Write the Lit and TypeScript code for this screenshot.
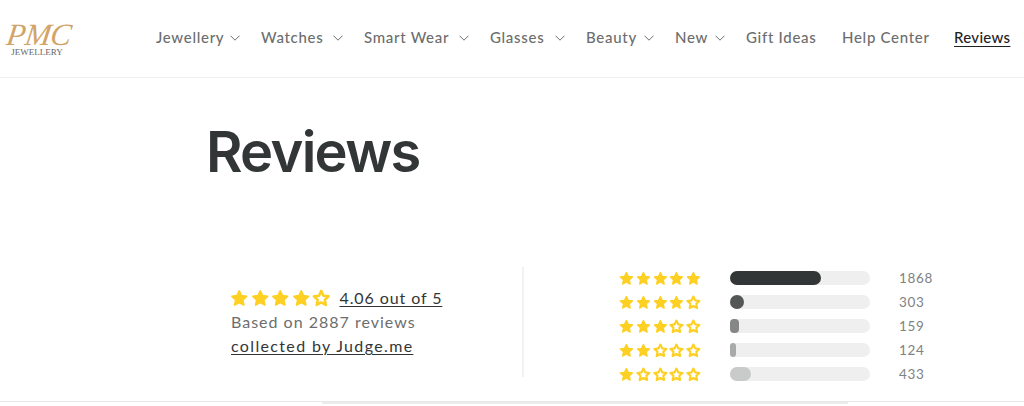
import { LitElement, html, css, svg } from "lit";
import { customElement } from "lit/decorators.js";

const STAR = "M12 3.4l2.6 5.6 6 .75-4.45 4.15 1.2 6L12 16.95l-5.35 2.95 1.2-6L3.4 9.75l6-.75z";

const star = (filled: boolean) =>
  svg`<path d=${STAR} fill=${filled ? "#fdd023" : "#fff"} stroke="#fdd023" stroke-width=${filled ? 2 : 3} stroke-linejoin="round"/>`;

const stars = (n: number, cls: string) => html`<span class="stars ${cls}">${[0, 1, 2, 3, 4].map(
  (i) => html`<svg viewBox="0 0 24 24" aria-hidden="true">${star(i < n)}</svg>`
)}</span>`;

const NAV: [string, number, boolean][] = [
  ["Jewellery", 64, true],
  ["Watches", 62, true],
  ["Smart Wear", 85, true],
  ["Glasses", 55, true],
  ["Beauty", 48, true],
  ["New", 30, true],
  ["Gift Ideas", 70, false],
  ["Help Center", 86, false],
];

const ROWS = [
  { n: 5, w: 91, r: 7, c: "#333637", count: 1868 },
  { n: 4, w: 14, r: 7, c: "#555757", count: 303 },
  { n: 3, w: 9, r: 4, c: "#858787", count: 159 },
  { n: 2, w: 6, r: 3, c: "#a8a9a9", count: 124 },
  { n: 1, w: 21, r: 7, c: "#c9caca", count: 433 },
];

@customElement("app-root")
export class AppRoot extends LitElement {
  static styles = css`
    :host {
      display: block;
      width: 1024px;
      height: 406px;
      overflow: hidden;
      background: #fff;
      font-family: "Lato", "Liberation Sans", sans-serif;
      color: #333637;
    }
    header {
      height: 77px;
      border-bottom: 1px solid #efefef;
      display: flex;
      align-items: center;
      padding-left: 5px;
      box-sizing: content-box;
    }
    .logo {
      width: 68px;
      margin-right: 83px;
      display: flex;
      flex-direction: column;
      align-items: center;
      margin-top: 2px;
    }
    .pmc {
      font-family: "Liberation Serif", serif;
      font-style: italic;
      font-size: 31px;
      line-height: 25px;
      letter-spacing: -0.5px;
      color: #d2a468;
      font-weight: 400;
      transform: skewX(-8deg);
    }
    .jew {
      font-family: "Liberation Serif", serif;
      font-size: 9px;
      line-height: 9px;
      letter-spacing: 0;
      margin-top: 1px;
      margin-right: 4px;
      color: #666;
    }
    nav {
      display: flex;
      align-items: center;
      font-size: 15px;
      font-weight: 500;
      letter-spacing: 0.7px;
      color: #6c6e6e;
      margin-top: -4px;
    }
    .item {
      display: flex;
      align-items: center;
      white-space: nowrap;
      margin-right: 26px;
    }
    .item.has {
      margin-right: 21px;
    }
    .item svg {
      width: 10px;
      height: 6px;
      margin-left: 10px;
      margin-top: 3px;
      flex: none;
    }
    .current {
      color: #1f2222;
      text-decoration: underline;
      text-underline-offset: 3px;
      text-decoration-thickness: 1px;
      letter-spacing: 0.3px;
      margin-right: 0;
    }
    main {
      padding-left: 206px;
    }
    h1 {
      margin: 0;
      padding-top: 38px;
      height: 74px;
      font-family: "Inter", "Lato", sans-serif;
      font-size: 56px;
      line-height: 72px;
      font-weight: 600;
      letter-spacing: -1.7px;
      color: #333637;
    }
    .summary {
      display: flex;
      margin-top: 77px;
      height: 110px;
    }
    .left {
      width: 293px;
      margin-left: 25px;
      border-right: 2px solid #f2f2f2;
      font-size: 16px;
      letter-spacing: 1px;
      line-height: 24px;
      padding-top: 19px;
      box-sizing: border-box;
      color: #6c6e6e;
      margin-right: 95px;
    }
    .top {
      display: flex;
      align-items: center;
    }
    .stars {
      display: inline-flex;
      flex: none;
    }
    .stars svg {
      display: block;
      flex: none;
    }
    .stars.big svg {
      width: 20.5px;
      height: 20.5px;
    }
    .stars.big {
      margin-left: -2px;
      margin-right: -1px;
    }
    .stars.small svg {
      width: 16.8px;
      height: 17px;
    }
    a {
      color: #333637;
      text-decoration: underline;
      text-underline-offset: 2px;
      text-decoration-thickness: 1px;
    }
    .top a {
      margin-left: 9px;
      letter-spacing: 0.9px;
    }
    .by {
      letter-spacing: 1.35px;
    }
    .rows {
      display: flex;
      flex-direction: column;
      margin-top: 4px;
      margin-left: -1px;
      gap: 10px;
    }
    .row {
      display: flex;
      align-items: center;
      height: 14px;
      font-size: 13.5px;
      letter-spacing: 0.7px;
      color: #808282;
    }
    .row .stars {
      width: 112px;
    }
    .track {
      width: 140px;
      height: 14px;
      border-radius: 7px;
      background: #efefef;
      margin-right: 29px;
    }
    .fill {
      height: 100%;
    }
    footer {
      margin-top: 24px;
      border-top: 1px solid #e8e8e8;
      padding-left: 322px;
    }
    footer div {
      width: 526px;
      height: 2px;
      background: #ececec;
    }
  `;

  render() {
    return html`
      <header>
        <div class="logo">
          <span class="pmc">PMC</span>
          <span class="jew">JEWELLERY</span>
        </div>
        <nav>
          ${NAV.map(
            ([label, w, has]) => html`<span class="item ${has ? "has" : ""}"><span style="width:${w}px">${label}</span>${has
              ? html`<svg viewBox="0 0 10 6" fill="none" stroke="#6c6e6e" stroke-width="1"><path d="M.5.7 5 5.2 9.5.7"/></svg>`
              : ""}</span>`
          )}
          <span class="item current">Reviews</span>
        </nav>
      </header>
      <main>
        <h1>Reviews</h1>
        <section class="summary">
          <div class="left">
            <div class="top">${stars(4, "big")}<a>4.06 out of 5</a></div>
            <div>Based on 2887 reviews</div>
            <div><a class="by">collected by Judge.me</a></div>
          </div>
          <div class="rows">
            ${ROWS.map(
              (r) => html`<div class="row">
                ${stars(r.n, "small")}
                <div class="track"><div class="fill" style="width:${r.w}px;background:${r.c};border-radius:${r.r}px"></div></div>
                <span>${r.count}</span>
              </div>`
            )}
          </div>
        </section>
      </main>
      <footer><div></div></footer>
    `;
  }
}
